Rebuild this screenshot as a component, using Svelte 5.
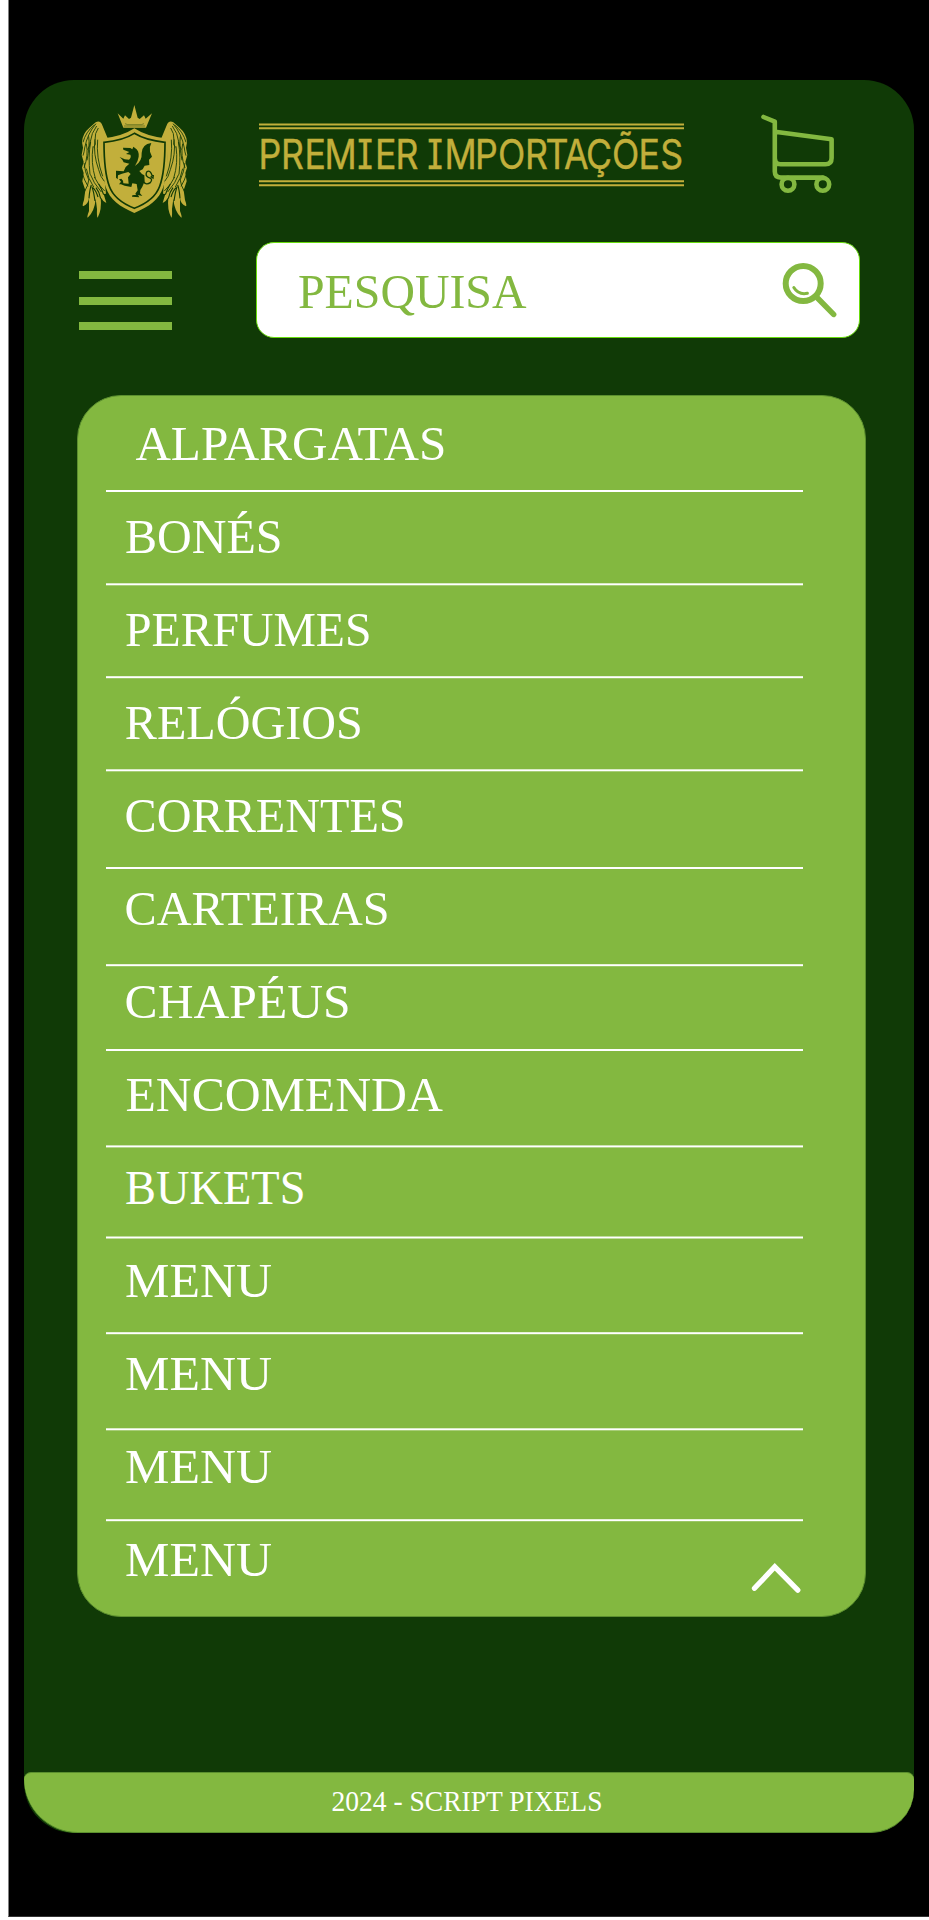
<script>
  // start: top of the row, rule: top of the divider below it
  const items = [
    { label: 'ALPARGATAS', x: 135.4, w: 311, start: 396, rule: 490 },
    { label: 'BONÉS', x: 125, w: 157.5, start: 492, rule: 583.3 },
    { label: 'PERFUMES', x: 125, w: 246.5, start: 585, rule: 676.2 },
    { label: 'RELÓGIOS', x: 124.8, w: 238, start: 678, rule: 769.3 },
    { label: 'CORRENTES', x: 124.6, w: 281, start: 771, rule: 867 },
    { label: 'CARTEIRAS', x: 124.6, w: 265, start: 869, rule: 964.2 },
    { label: 'CHAPÉUS', x: 124.6, w: 226, start: 966, rule: 1049 },
    { label: 'ENCOMENDA', x: 125.4, w: 317.5, start: 1051, rule: 1145.4 },
    { label: 'BUKETS', x: 125, w: 180.5, start: 1147, rule: 1236.5 },
    { label: 'MENU', x: 125, w: 147, start: 1238, rule: 1332.2 },
    { label: 'MENU', x: 125, w: 147, start: 1334, rule: 1428.3 },
    { label: 'MENU', x: 125, w: 147, start: 1430, rule: 1519.2 },
    { label: 'MENU', x: 125, w: 147, start: 1521, rule: 0 }
  ];
  const rows = items.map((it, i) => {
    const end = it.rule ? Math.floor(it.rule) + 2 : 1616;
    return { ...it, h: end - it.start, base: 460 + 93 * i - it.start, ruleY: it.rule - it.start };
  });

  const starts = [258.4, 280.9, 304.4, 324.4, 357.2, 374.9, 395.4, 419, 427.2, 444.4, 474.9, 498, 524.9, 545.6, 564, 586, 612, 638.4, 660.2];
  const squeeze = 0.88;
  const brandX = starts.map((s) => ((s - 259) / squeeze).toFixed(2)).join(' ');
</script>

<div class="page">
  <main class="frame">
    <header>
      <svg class="emblem" viewBox="240 130 330 351" width="110" height="117" aria-hidden="true">
        <g class="gold">
          <path d="M353 161 L370 177 L375 167 L387 178 L393 174 L403 136 L413 174 L419 178 L432 167 L437 177 L456 161 L438 204 H370 Z" />
          <path d="M403 206 Q365 232 303 237 C302 300 305 345 317 382 C330 421 360 441 403 460 C447 441 477 421 490 382 C502 345 505 300 504 237 Q442 232 403 206Z" />
        </g>
        <path class="cut" stroke-width="2" d="M375 192 L383 195 H424 L432 192 M372 199 H435" opacity=".65" />
        <path class="cut" stroke-width="5" d="M403 221 Q370 242 312 248 C312 300 315 345 328 380 C338 408 362 430 403 446 C445 430 469 408 479 380 C492 345 495 300 495 248 Q437 242 403 221Z" />
        {#each [0, 1] as side}
          <g transform={side ? 'translate(807 0) scale(-1 1)' : undefined}>
            <path class="gold" d="M287 188 Q298 181 305 192 L323 236 L303 240 L306 312 L315 374 L318 402 L311 403 L319 430 Q309 426 302 413 Q306 451 293 474 Q290 474 291 448 L287 417 Q284 455 263 474 Q260 473 267 454 L267 415 Q265 434 249 440 Q246 438 252 421 L256 392 L247 365 L251 340 L246 324 L251 307 L245 286 L249 264 L246 248 Q247 222 270 203 Z" />
            <path class="cut" stroke-width="2.6" d="M283 196 Q257 217 249 248 M288 192 Q262 222 254 265 Q253 276 249 288 M290 199 Q274 220 271 246 Q270 259 263 270 M295 205 Q284 220 285 242 Q289 255 281 263 M266 230 Q270 258 261 302 M259 252 Q266 286 252 325 M272 246 Q264 290 270 344 M279 260 Q272 310 286 356 M285 239 Q279 283 296 330 Q301 352 313 365 M293 240 Q288 294 308 350 M252 310 Q255 338 266 360 M248 344 Q252 360 264 380 M259 327 Q264 357 281 382 M271 344 Q279 368 304 397 M283 352 Q293 374 314 394 M253 397 Q265 377 267 358" />
            <path class="cut" stroke-width="3.4" d="M267 416 Q269 389 274 376 M285 424 Q282 399 276 381 M294 412 Q288 393 279 384 M302 417 Q299 398 288 384 M311 405 Q304 386 296 373" />
          </g>
        {/each}
        <g class="dark">
          <path d="M369 264 L391 265 L397 269 L400 261 L405 265 Q418 273 416 291 Q414 305 405 319 Q427 305 425 280 Q426 254 454 250 Q447 262 450 276 L456 291 L447 300 L448 316 L434 318 L428 329 L418 334 Q424 343 433 347 L434 365 L427 381 L421 391 L420 401 L427 409 L414 406 L418 413 L396 411 L397 407 L409 405 L406 402 L413 392 L410 373 L397 371 L394 382 L374 378 L363 374 L357 374 L363 366 L357 359 L364 357 L369 363 L370 371 L386 372 L384 353 L392 343 L385 337 L366 342 L354 347 L353 359 L348 354 L348 333 L371 335 L377 322 L388 312 L371 308 L367 300 L359 292 L374 299 L387 300 Q395 292 391 285 L378 283 L388 277 L370 270 Z" />
        </g>
        <path class="cut" stroke-width="4" d="M430 365 Q438 378 451 369 Q461 357 445 353 Q435 348 440 337 Q450 328 457 349 M452 350 L459 355 L460 346" />
      </svg>

      <svg class="brand" viewBox="259 123 425 64" width="425" height="64">
        <path stroke="#c2af3b" stroke-width="2" d="M259 124.4H684M259 128.3H684M259 181.3H684M259 185.2H684" />
        <text transform="translate(259 169.2) scale({squeeze} 1)" x={brandX}>PREMIER IMPORTAÇÕES</text>
      </svg>

      <svg class="cart" viewBox="760 112 77 84" width="77" height="84" aria-label="Carrinho">
        <path d="M763.5 117 L774.8 121.7 V171.5 Q774.8 177.6 781 177.6 H823 M775 131.8 L831.6 139.2 V158 Q831.6 164.3 825.5 164.3 H780.5 Q775 164.3 775 159" />
        <circle cx="788" cy="184.3" r="6.4" />
        <circle cx="822.8" cy="184.3" r="6.4" />
      </svg>
    </header>

    <div class="toolbar">
      <button class="burger" aria-label="Menu"><i></i><i></i><i></i></button>
      <div class="search">
        <svg class="serif" width="240" height="60" viewBox="294 263 240 60">
          <text x="298" y="308" textLength="228.5" lengthAdjust="spacingAndGlyphs">PESQUISA</text>
        </svg>
        <svg class="lens" viewBox="780 260 60 60" width="60" height="60" aria-hidden="true">
          <circle cx="803.2" cy="283.5" r="17.5" stroke-width="6" />
          <path stroke-width="5.6" d="M817.5 298 L833.6 314.4" />
          <path stroke-width="3" d="M793.8 287.5 Q798.5 295.2 807.4 293.3" />
        </svg>
      </div>
    </div>

    <nav class="card">
      {#each rows as row}
        <svg class="row serif" width="787" height={row.h} viewBox="78 0 787 {row.h}">
          <text x={row.x} y={row.base} textLength={row.w} lengthAdjust="spacingAndGlyphs">{row.label}</text>
          {#if row.rule}
            <rect x="106" y={row.ruleY} width="697" height="2" />
          {:else}
            <path class="chevron" d="M754.5 {1588.3 - row.start} L774.8 {1566.8 - row.start} L797.8 {1590.1 - row.start}" />
          {/if}
        </svg>
      {/each}
    </nav>

    <footer>
      <svg class="serif note" width="290" height="50" viewBox="326 1778 290 50">
        <text x="331.5" y="1811" textLength="271" lengthAdjust="spacingAndGlyphs">2024 - SCRIPT PIXELS</text>
      </svg>
    </footer>
  </main>
</div>

<style>
  :global(body) { background: #fff; }
  svg { display: block; flex: none; overflow: visible; }
  .page {
    box-sizing: border-box;
    width: 921px;
    height: 1917px;
    margin-left: 8px;
    padding: 80px 0 0 15px;
    background: #000;
    border-left: 1px solid #808080;
    border-bottom: 1px solid #333;
  }
  .frame {
    display: flex;
    flex-direction: column;
    width: 890px;
    height: 1753px;
    border-radius: 50px;
    background: #103a06;
  }
  header {
    display: flex;
    align-items: flex-start;
    padding: 23px 0 0 56px;
  }
  .brand { margin: 20px 0 0 69px; }
  .brand text {
    font-family: Inter, "Liberation Sans", sans-serif;
    font-size: 40.5px;
    font-feature-settings: "cv08" 1;
    fill: #c2af3b;
    stroke: #c2af3b;
    stroke-width: 0.4;
  }
  .cart { margin: 9px 0 0 76px; }
  .cart, .lens {
    fill: none;
    stroke: #83b840;
    stroke-linecap: round;
    stroke-linejoin: round;
  }
  .cart { stroke-width: 4.6; }
  .gold { fill: #c2af3b; }
  .dark { fill: #103a06; }
  .cut { fill: none; stroke: #103a06; }
  .toolbar {
    display: flex;
    align-items: flex-start;
    margin-top: 22px;
    padding-left: 55px;
  }
  .burger {
    display: flex;
    flex-direction: column;
    gap: 18px;
    width: 93px;
    margin-top: 29px;
    padding: 0;
    border: 0;
    background: none;
  }
  .burger i { height: 8px; background: #83b840; }
  .burger i:last-child { margin-top: -1px; }
  .search {
    box-sizing: border-box;
    display: flex;
    align-items: flex-start;
    justify-content: space-between;
    width: 604px;
    height: 96px;
    margin-left: 84px;
    padding: 20px 19px 0 37px;
    border: 1px solid #68dc0c;
    border-radius: 18px;
    background: #fff;
  }
  .lens { margin-top: -3px; }
  .serif text {
    font-family: "Palatino Linotype", "Book Antiqua", Palatino, "Liberation Serif", serif;
    font-size: 49px;
    fill: #fff;
  }
  .search .serif text { fill: #83b840; }
  .card {
    box-sizing: border-box;
    width: 789px;
    height: 1222px;
    margin: 57px 0 0 53px;
    border: 1px solid #5b8f2e;
    border-radius: 44px;
    background: #83b840;
  }
  .row rect { fill: #fff; }
  .chevron {
    fill: none;
    stroke: #fff;
    stroke-width: 5.3;
    stroke-linecap: round;
  }
  footer {
    box-sizing: border-box;
    display: flex;
    height: 61px;
    margin-top: auto;
    padding: 5px 0 0 302px;
    border: solid #5b8f2e;
    border-width: 1px 0;
    border-radius: 7px 7px 43px 54px;
    background: #83b840;
  }
  .note.serif text { font-size: 28.5px; }
</style>
